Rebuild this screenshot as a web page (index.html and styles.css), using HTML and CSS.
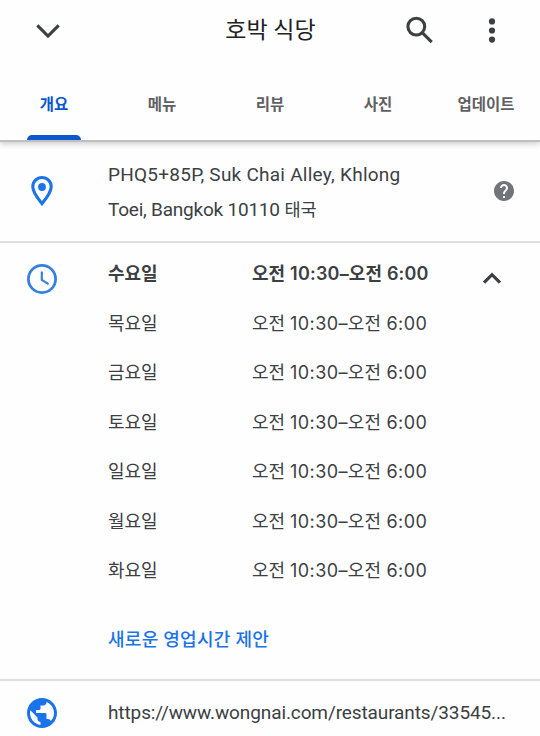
FILE: index.html
```html
<!DOCTYPE html>
<html lang="ko">
<head>
<meta charset="utf-8">
<title>호박 식당</title>
<link rel="stylesheet" href="styles.css">
</head>
<body>
<header class="header">
  <div class="topbar">
    <svg class="icon" viewBox="0 0 36 36"><path class="stroke" d="M7.3 13.3 18 24 28.7 13.3"/></svg>
    <h1 class="title">호박 식당</h1>
    <svg class="icon" viewBox="0 0 36 36"><circle class="stroke" cx="14.3" cy="14.6" r="8.4"/><path class="stroke" d="m20.5 20.8 9.2 9.3"/></svg>
    <svg class="icon" viewBox="0 0 36 36"><circle cx="18" cy="9.4" r="3.1"/><circle cx="18" cy="18.5" r="3.1"/><circle cx="18" cy="27.6" r="3.1"/></svg>
  </div>
  <nav class="tabs">
    <span class="tab active">개요</span>
    <span class="tab">메뉴</span>
    <span class="tab">리뷰</span>
    <span class="tab">사진</span>
    <span class="tab">업데이트</span>
  </nav>
</header>
<main>
  <section class="row address">
    <svg class="lead" viewBox="0 0 32 32"><path class="line pin" d="M16 28.6C13.7 25.6 6.8 17.9 6.8 11.7a9.2 9.2 0 0 1 18.4 0C25.2 17.9 18.3 25.6 16 28.6Z"/><circle cx="16" cy="12" r="3.9"/></svg>
    <p class="place"><span class="place-a">PHQ5+85P, Suk Chai Alley, Khlong</span><br><span class="place-b">Toei, Bangkok 10110</span> <span class="country">태국</span></p>
    <svg class="help" viewBox="0 0 24 24"><path d="M12 2C6.48 2 2 6.48 2 12s4.48 10 10 10 10-4.48 10-10S17.52 2 12 2zm1 17h-2v-2h2v2zm2.07-7.75-.9.92C13.45 12.9 13 13.5 13 15h-2v-.5c0-1.1.45-2.1 1.17-2.83l1.24-1.26c.37-.36.59-.86.59-1.41 0-1.1-.9-2-2-2s-2 .9-2 2H8c0-2.21 1.79-4 4-4s4 1.79 4 4c0 .88-.36 1.68-.93 2.25z"/></svg>
  </section>
  <section class="row hours">
    <svg class="lead clock" viewBox="0 0 32 32"><circle class="line" cx="16" cy="16" r="13.6"/><path class="hand" d="M15.8 8.4V17l6.8 4.1"/></svg>
    <div class="schedule">
      <dl class="days">
        <div class="day today"><dt>수요일</dt><dd>오전 <span class="open">10:30–</span>오전 <span class="close">6:00</span></dd></div>
        <div class="day"><dt>목요일</dt><dd>오전 <span class="open">10:30–</span>오전 <span class="close">6:00</span></dd></div>
        <div class="day"><dt>금요일</dt><dd>오전 <span class="open">10:30–</span>오전 <span class="close">6:00</span></dd></div>
        <div class="day"><dt>토요일</dt><dd>오전 <span class="open">10:30–</span>오전 <span class="close">6:00</span></dd></div>
        <div class="day"><dt>일요일</dt><dd>오전 <span class="open">10:30–</span>오전 <span class="close">6:00</span></dd></div>
        <div class="day"><dt>월요일</dt><dd>오전 <span class="open">10:30–</span>오전 <span class="close">6:00</span></dd></div>
        <div class="day"><dt>화요일</dt><dd>오전 <span class="open">10:30–</span>오전 <span class="close">6:00</span></dd></div>
      </dl>
      <a class="suggest">새로운 영업시간 제안</a>
    </div>
    <svg class="collapse" viewBox="0 0 24 24"><path class="stroke" d="M4 15.7 12 7.7l8 8"/></svg>
  </section>
  <section class="row website">
    <svg class="lead" viewBox="0 0 32 32"><path transform="translate(-2 -2) scale(1.5)" d="M12 2C6.48 2 2 6.48 2 12s4.48 10 10 10 10-4.48 10-10S17.52 2 12 2zm-1 17.93c-3.95-.49-7-3.85-7-7.93 0-.62.08-1.21.21-1.79L9 15v1c0 1.1.9 2 2 2v1.93zm6.9-2.54c-.26-.81-1-1.39-1.9-1.39h-1v-3c0-.55-.45-1-1-1H8v-2h2c.55 0 1-.45 1-1V7h2c1.1 0 2-.9 2-2v-.41c2.93 1.19 5 4.06 5 7.41 0 2.08-.8 3.97-2.1 5.39z"/></svg>
    <span class="url">https://www.wongnai.com/restaurants/33545...</span>
  </section>
</main>
</body>
</html>
```
FILE: styles.css
```css
* { box-sizing: border-box; }
body {
  margin: 0;
  height: 736px;
  overflow: hidden;
  background: #fefefe;
  color: #3c4043;
  font: 18px/34px Roboto, "Noto Sans CJK KR", sans-serif;
}
svg { display: block; flex: none; fill: currentColor; }
h1, p, dl, dd { margin: 0; }
.stroke { fill: none; stroke: currentColor; stroke-width: 3.1; }
.header {
  position: relative;
  height: 142px;
  border-bottom: 2px solid #bfbfbf;
  box-shadow: 0 2px 6px rgba(0, 0, 0, .2);
}
.topbar {
  display: grid;
  grid-template-columns: 36px 1fr 36px 36px;
  column-gap: 36px;
  align-items: center;
  height: 60px;
  padding: 0 30px;
}
.icon { width: 36px; height: 36px; }
.title {
  padding: 2px 0 0 73px;
  text-align: center;
  font-size: 23px;
  font-weight: 400;
  color: #202124;
}
.tabs { display: grid; grid-template-columns: repeat(5, 108px); height: 80px; }
.tab {
  padding-top: 28px;
  text-align: center;
  font-size: 15.5px;
  font-weight: 700;
  color: #5f6063;
}
.active { color: #0b57d0; }
.active::after {
  content: "";
  display: block;
  width: 54px;
  height: 5px;
  margin: 13px auto 0;
  border-radius: 5px 5px 0 0;
  background: #0b57d0;
}
.row { display: flex; padding: 0 26px; border-bottom: 2px solid #dedfe0; }
.lead { width: 32px; height: 32px; margin-right: 50px; color: #1a73e8; }
.line { fill: none; stroke: currentColor; stroke-width: 2.8; }
.address { height: 101px; padding-top: 15px; }
.address .lead { margin-top: 18px; }
.pin { stroke-width: 3.1; }
.place { flex: 1; padding-top: 1px; font-size: 19px; line-height: 34.5px; }
.place-a { letter-spacing: .25px; }
.place-b { letter-spacing: -.22px; }
.country { font-size: 17.5px; }
.help { width: 24px; height: 24px; margin: 22px -2px 0 0; color: #70757a; }
.hours { height: 438px; padding-top: 14px; }
.clock { margin-top: 6px; color: #3880df; }
.hand { fill: none; stroke: currentColor; stroke-width: 2.2; }
.schedule { flex: 1; }
.day { display: grid; grid-template-columns: 144px 1fr; height: 49.5px; }
dd { white-space: nowrap; }
.open, .close { font-family: Inter, Roboto, sans-serif; line-height: 1; }
.open { margin-left: .5px; letter-spacing: .4px; }
.close { margin-left: 1px; letter-spacing: .45px; }
.today { font-weight: 700; }
.today .open, .today .close { font-weight: 600; }
.today .open { letter-spacing: .2px; }
.today .close { margin-left: .5px; letter-spacing: .1px; }
.collapse { width: 24px; height: 24px; margin: 10px 10px 0 0; }
.suggest { display: block; margin-top: 19px; color: #1a73e8; font-weight: 500; letter-spacing: .28px; }
.website { align-items: center; height: 64px; border-bottom: 0; }
.url { font-size: 19px; letter-spacing: -.11px; white-space: nowrap; }
```
